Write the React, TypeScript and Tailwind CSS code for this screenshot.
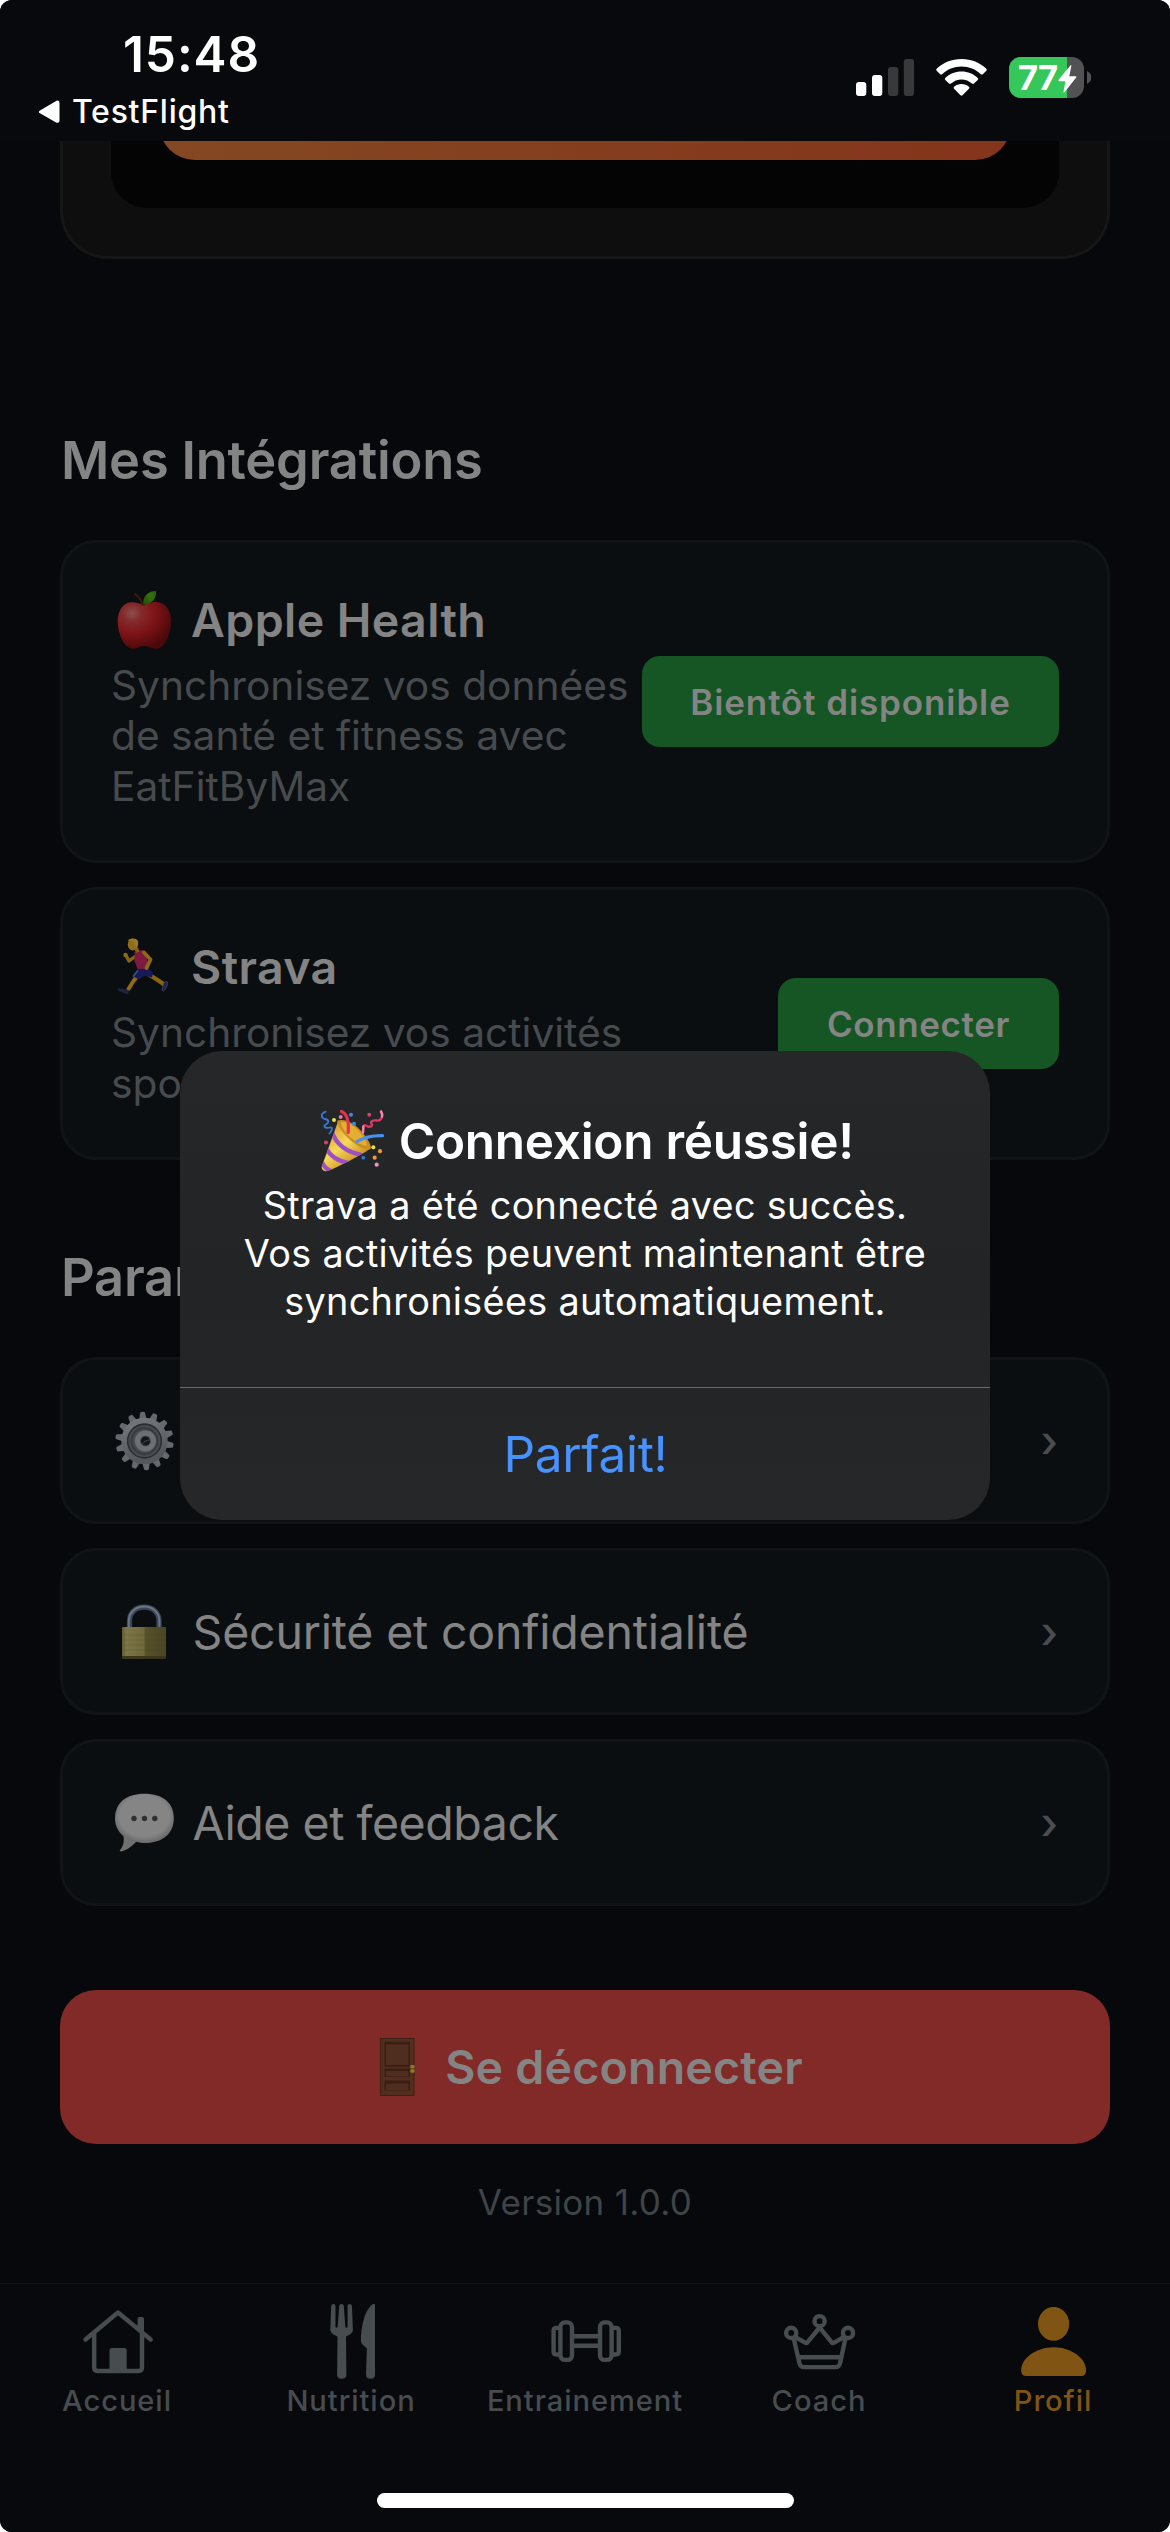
import React from 'react';

function AppleIcon() {
  return (
    <svg className="h-[60px] w-[60px] shrink-0" viewBox="0 0 60 60">
      <defs>
        <radialGradient id="apple-body" cx="0.27" cy="0.24" r="0.8">
          <stop offset="0" stopColor="#8a4f4b" />
          <stop offset="0.24" stopColor="#85282a" />
          <stop offset="0.55" stopColor="#7d1416" />
          <stop offset="1" stopColor="#4c080b" />
        </radialGradient>
        <linearGradient id="apple-leaf" x1="0" y1="1" x2="1" y2="0">
          <stop offset="0" stopColor="#1e4a06" />
          <stop offset="0.6" stopColor="#34700c" />
          <stop offset="1" stopColor="#28600a" />
        </linearGradient>
      </defs>
      <path d="M30 15C35 12 40 11.500 45 12.500C53 14 57 22 57 31C57 43 51 58.700 42 58.700C37 58.700 35 56 30 56C25 56 24 58.700 19 58.700C10 58.700 3.700 43 3.700 31C3.700 21 9 12.500 17 12.200C22 12 26 13.500 30 15Z" fill="url(#apple-body)" />
      <path d="M21 4C25 6.500 27.500 10 28.500 15" fill="none" stroke="#4a1b12" strokeWidth="1.800" strokeLinecap="round" />
      <path d="M29.300 14.800C28 7 34 1 42 1C42.600 8.500 38 14 29.300 14.800Z" fill="url(#apple-leaf)" />
    </svg>
  );
}

function RunnerIcon() {
  return (
    <svg className="h-[60px] w-[60px] shrink-0" viewBox="0 0 60 60" fill="none" strokeLinecap="round" strokeLinejoin="round">
      <path d="M21 19.500L15 24L12 18.500" stroke="#8a6410" strokeWidth="3.400" />
      <circle cx="11.500" cy="18" r="2.200" fill="#8f6a14" />
      <path d="M34 37L42 42L49.500 47" stroke="#8a6410" strokeWidth="4.200" />
      <path d="M24 38L19.500 44L14.500 52" stroke="#8f6a14" strokeWidth="4" />
      <path d="M4.500 51.500L14.500 53.500L13.500 57L5 53.500Z" fill="#1c2342" stroke="#1c2342" strokeWidth="1" />
      <path d="M53 44.500C55 46 52 52 49.500 54L48 53L50 46Z" fill="#1c2342" stroke="#39405e" strokeWidth="1" />
      <path d="M20.500 15L27 13L30 13.500L32.500 19L34.500 31.500L24 33L20.500 24Z" fill="#7d1a40" />
      <path d="M24 32L35 31.500L39 36L38 40.500L31 38.500L25 42.500L18.500 39Z" fill="#151b57" />
      <path d="M23.500 34L19.500 39" stroke="#3c4a86" strokeWidth="1.800" />
      <path d="M30 15.500L36.500 22.500L32.500 31" stroke="#8f6a14" strokeWidth="3.800" />
      <path d="M20 11L24 10.500L25.500 14.500L22 16Z" fill="#85600f" />
      <ellipse cx="18.600" cy="7.500" rx="4.800" ry="6" fill="#8f6c1a" />
      <path d="M13.500 3.500C16 .8 22.500 .5 24 4C24.500 7 24 9.500 22.500 11.500L20.500 7.500L19 4.200Z" fill="#9a7a20" />
    </svg>
  );
}

function PartyIcon() {
  return (
    <svg className="h-[62px] w-[62px] shrink-0 overflow-visible" viewBox="0 0 62 62" fill="none" strokeLinecap="round">
      <defs>
        <linearGradient id="cone" x1="0.2" y1="0.2" x2="0.7" y2="0.85">
          <stop offset="0" stopColor="#e0a83a" />
          <stop offset="0.45" stopColor="#f7d95a" />
          <stop offset="1" stopColor="#c98a1e" />
        </linearGradient>
        <clipPath id="cone-shape">
          <path d="M17.300 10.700L49.500 38.500C40 45 18 57 6 61C3 62 .2 59.500 .8 56.500Z" />
        </clipPath>
      </defs>
      <path d="M17.300 10.700L49.500 38.500C40 45 18 57 6 61C3 62 .2 59.500 .8 56.500Z" fill="url(#cone)" />
      <g clipPath="url(#cone-shape)" stroke="#9b4fc8" strokeWidth="4.200">
        <path d="M11 22C15 34 25 42 41 45" />
        <path d="M5 38C9 46 16 51 28 53" />
        <path d="M1 52C3 57 6 60 11 61" />
      </g>
      <path d="M16.500 10.500C25 8 34 14 41 22C47 29 51 36 49.500 39C44 41 34 35 27 28C20 21 15.500 14 16.500 10.500Z" fill="#c8901f" />
      <path d="M20 12C28 11 36 18 41 25C44 29 46 33 46 36C40 35 33 31 28 26C23 21 20 16 20 12Z" fill="#e3ad36" />
      <path d="M20.500 1.500C27 4 28 12 27.200 22.500" stroke="#e8314e" strokeWidth="3.200" />
      <path d="M36 31.500C44 26.500 52 25.500 61.500 25.700" stroke="#4791ee" strokeWidth="3.200" />
      <path d="M4.700 1.700C-1 4 0 8 4 9C9 10 8 13 4 15C2 17 5 18.500 9 17.500C12 17 11.500 20 8.500 23.500" stroke="#3a78d8" strokeWidth="1.800" />
      <path d="M60 1.500C63 6 60 11 56 10.500C52 10 48 11.500 51 14.500C52 17 47 17.500 45 15.500C41.500 14 42.500 19 42 22.500" stroke="#dc3860" strokeWidth="2.300" />
      <path d="M60 1.500C61 3 61.300 5 61 6.500" stroke="#f08ab5" strokeWidth="2.300" />
      <path d="M42.300 16.500L42 22.500" stroke="#f08ab5" strokeWidth="2.300" />
      <circle cx="13" cy="10" r="2" fill="#efe045" />
      <circle cx="19.700" cy="7" r="2" fill="#e878a8" />
      <circle cx="30" cy="4.700" r="2" fill="#3f88e6" />
      <circle cx="33" cy="13.700" r="2" fill="#3f88e6" />
      <circle cx="48.300" cy="4.700" r="2" fill="#d84070" />
      <circle cx="52.300" cy="37.300" r="2" fill="#efe045" />
      <circle cx="59" cy="41.200" r="2.100" fill="#ee9a3c" />
      <circle cx="53.700" cy="47.700" r="2.100" fill="#ee9a3c" />
      <circle cx="42.300" cy="47.700" r="2" fill="#3070c8" />
      <circle cx="55.700" cy="54.700" r="2.100" fill="#ee8fc0" />
      <circle cx="5" cy="32.500" r="2" fill="#d84068" />
    </svg>
  );
}

const teeth = Array.from({ length: 14 }, (_, i) => (i * 360) / 14 - 4);

function GearIcon() {
  return (
    <svg className="h-[60px] w-[60px] shrink-0" viewBox="0 0 60 60" fill="none">
      <defs>
        <linearGradient id="gear" x1="0" y1="0" x2="0.3" y2="1">
          <stop offset="0" stopColor="#74777b" />
          <stop offset="1" stopColor="#55575c" />
        </linearGradient>
      </defs>
      {teeth.map((a) => (
        <path key={a} d="M26.600 9L28 2Q28.200 .8 29.400 .8H31.600Q32.800 .8 33 2L34.400 9Z" fill="#65686d" transform={`rotate(${a} 30.500 30)`} />
      ))}
      <circle cx="30.500" cy="30" r="20.200" stroke="url(#gear)" strokeWidth="6" />
      <circle cx="30.500" cy="30" r="17.500" fill="#484b4f" />
      <circle cx="30.500" cy="30" r="16.800" stroke="#2a2c2f" strokeWidth="1.400" />
      <circle cx="30.500" cy="30" r="13" stroke="#383b3e" strokeWidth="1.800" />
      <circle cx="31.500" cy="30" r="8" stroke="#6c6f74" strokeWidth="5.200" />
      <circle cx="31.500" cy="30" r="4.600" fill="#14171a" />
      <path d="M28.500 33C30 30.500 33 29 35.500 29" stroke="#4a4c50" strokeWidth="1" />
    </svg>
  );
}

function LockIcon() {
  return (
    <svg className="h-[60px] w-[60px] shrink-0" viewBox="0 0 60 60" fill="none">
      <defs>
        <linearGradient id="lock" x1="0" x2="1">
          <stop offset="0" stopColor="#635c33" />
          <stop offset="0.1" stopColor="#7b7547" />
          <stop offset="0.5" stopColor="#6f683a" />
          <stop offset="0.53" stopColor="#58522b" />
          <stop offset="1" stopColor="#4a4522" />
        </linearGradient>
      </defs>
      <path d="M15.500 26V19C15.500 10 22 5.200 30.200 5.200S45 10 45 19V26" stroke="#3d4652" strokeWidth="5.200" />
      <path d="M14.800 26V19C14.800 10 22 4.600 30.200 4.600S45.400 10 45.400 19V26" stroke="#66768a" strokeWidth="2" />
      <rect x="8" y="25" width="44" height="31.500" rx="1.200" fill="url(#lock)" />
      <rect x="8" y="54" width="44" height="2.500" fill="#3d3719" />
      <path d="M9 33H51M9 38H51M9 43H51M9 48H51" stroke="#3c3718" strokeOpacity="0.15" />
    </svg>
  );
}

function BubbleIcon() {
  return (
    <svg className="h-[60px] w-[60px] shrink-0" viewBox="0 0 60 60">
      <defs>
        <radialGradient id="bubble" cx="0.5" cy="0.45" r="0.56">
          <stop offset="0.75" stopColor="#858585" />
          <stop offset="1" stopColor="#676767" />
        </radialGradient>
      </defs>
      <path d="M9 41C11 48 9 54 6 57C5 58.500 7 58.800 9 58C15 56 19 52 23 48Z" fill="#707070" />
      <path d="M30.500 .8C49 .8 59.800 10 59.800 25.500S48 50 31.500 50S1 41 1 25.500S12 .8 30.500 .8Z" fill="url(#bubble)" />
      <circle cx="20" cy="25.500" r="2.700" fill="#303030" />
      <circle cx="30.500" cy="25.500" r="2.700" fill="#303030" />
      <circle cx="40.800" cy="25.500" r="2.700" fill="#303030" />
    </svg>
  );
}

function DoorIcon() {
  return (
    <svg className="h-[60px] w-[60px] shrink-0" viewBox="0 0 60 60">
      <rect x="13" y="1" width="34.500" height="58" fill="#3c2013" />
      <rect x="14" y="2" width="32.500" height="56" fill="#522e1f" />
      <rect x="17.500" y="4.700" width="25.500" height="25" fill="#3a1e12" />
      <rect x="19" y="7.500" width="22.500" height="20.500" fill="#4f2d1f" />
      <rect x="17.500" y="31.500" width="25.500" height="8.500" fill="#3a1e12" />
      <rect x="19" y="34" width="22.500" height="5.500" fill="#4f2d1f" />
      <rect x="17.500" y="43.500" width="25.500" height="10" fill="#3a1e12" />
      <rect x="19" y="46.500" width="22.500" height="6.500" fill="#4f2d1f" />
      <rect x="43.300" y="28" width="4.200" height="3.500" rx="1" fill="#8b7b22" />
      <rect x="43.300" y="32.300" width="4.200" height="3.500" rx="1" fill="#8b7b22" />
    </svg>
  );
}

function StatusBar() {
  return (
    <header className="flex h-[141px] shrink-0 items-start justify-between bg-[#07090d] pr-[79px] pl-[38px] text-white">
      <div className="pt-6">
        <div className="ml-[85px] text-[49.5px] leading-[60px] font-semibold tracking-[0.92px]">15:48</div>
        <div className="mt-2 flex items-center gap-3">
          <svg className="h-6 w-[22px]" viewBox="0 0 22 24">
            <path d="M2 10.500L18.500 .8Q21.500 -.2 21.500 3V20.500Q21.500 23.500 18.500 22.700L2 13.300Q-.4 12 2 10.500Z" fill="#fff" />
          </svg>
          <span className="text-[32px] leading-10 font-medium tracking-[0.73px]">TestFlight</span>
        </div>
      </div>
      <div className="flex items-start gap-[22px] pt-[57px]">
        <svg className="mt-0.5 h-[37px] w-[58px]" viewBox="0 0 58 37">
          <rect x="0" y="23" width="10.300" height="14" rx="3" fill="#fff" />
          <rect x="16" y="16" width="10.300" height="21" rx="3" fill="#fff" />
          <rect x="32" y="8" width="10.300" height="29" rx="3" fill="#39393c" />
          <rect x="47.800" y="0" width="10.200" height="37" rx="3" fill="#39393c" />
        </svg>
        <svg className="mt-0.5 h-[37px] w-[51px]" viewBox="0 0 51 37" fill="#fff">
          <path d="M25.500 0C35.300 0 44 3.700 50.300 9.700Q51.300 10.700 50.300 11.700L46.800 15.200Q45.800 16 44.800 15.200C39.700 10.300 33 7.500 25.500 7.500S11.300 10.300 6.200 15.200Q5.200 16 4.200 15.200L.7 11.700Q-.3 10.700 .7 9.700C7 3.700 15.700 0 25.500 0Z" />
          <path d="M25.500 12.600C31.800 12.600 37.500 15 41.700 18.900Q42.700 19.900 41.700 20.900L38 24.500Q37 25.300 36 24.500C33.200 22 29.500 20.400 25.500 20.400S17.800 22 15 24.500Q14 25.300 13 24.500L9.300 20.900Q8.300 19.900 9.300 18.900C13.500 15 19.200 12.600 25.500 12.600Z" />
          <path d="M25.500 25C28.300 25 30.900 26 32.900 27.700Q33.900 28.700 32.900 29.700L26.500 36.300Q25.500 37.200 24.500 36.300L18.100 29.700Q17.100 28.700 18.100 27.700C20.100 26 22.700 25 25.500 25Z" />
        </svg>
        <div className="relative flex items-center gap-[3px]">
          <div className="flex h-[41px] w-[75px] overflow-hidden rounded-[12px] bg-[#525255]">
            <div className="h-full w-[58px] bg-[#35c759] pl-[9px] text-[34.500px] leading-[41px] font-bold tracking-[-0.8px]">77</div>
          </div>
          <svg className="h-[13px] w-1" viewBox="0 0 4 13">
            <path d="M0 0Q4.500 2.500 4.500 6.500T0 13Z" fill="#525255" />
          </svg>
          <svg className="absolute top-2 left-[49px] h-7 w-[19px]" viewBox="0 0 19 28">
            <path d="M12.500 .3Q13.700 -.2 13.300 1.200L11.300 11.200H17.500Q19 11.400 18 12.800L6.500 27.300Q5.300 28.200 5.500 26.600L7.500 16.200H1.300Q-.2 16 .8 14.500Z" fill="#fff" />
          </svg>
        </div>
      </div>
    </header>
  );
}

const cardClass = 'flex items-center rounded-[36px] border-[3px] border-[#101417] bg-[#0a0e10]';

function Integration({ icon, title, lines, action, sizeClass, buttonClass }: { icon: React.ReactNode; title: string; lines: string[]; action: string; sizeClass: string; buttonClass: string }) {
  return (
    <section className={`${cardClass} ${sizeClass} justify-between px-12`}>
      <div className="w-[531px]">
        <h3 className="flex h-[58px] items-center gap-[17px] pl-[3px] text-[46.5px] leading-[58px] font-semibold tracking-[0.4px] text-[#848484]">
          {icon}
          {title}
        </h3>
        <p className="mt-3 text-[40.7px] leading-[50.5px] whitespace-nowrap text-[#474b4e]">
          {lines.map((l) => (
            <span key={l} className="block">{l}</span>
          ))}
        </p>
      </div>
      <button className={`${buttonClass} h-[91px] shrink-0 rounded-[18px] bg-[#155624] pt-px text-[35px] font-semibold whitespace-nowrap text-[#848484]`}>{action}</button>
    </section>
  );
}

function MenuItem({ icon, label, labelClass }: { icon: React.ReactNode; label: string; labelClass: string }) {
  return (
    <div className={`${cardClass} h-[167px] px-12`}>
      <div className="flex flex-1 items-center gap-[18.5px] pl-[3px] text-[46.5px] leading-[58px] text-[#848484]">
        {icon}
        <span className={labelClass}>{label}</span>
      </div>
      <span className="mr-px text-[44px] leading-[58px] font-medium text-[#4a4d4f]">›</span>
    </div>
  );
}

const iconClass = 'h-[99px] w-[90px]';

function Tab({ label, active, children }: { label: string; active?: boolean; children: React.ReactNode }) {
  return (
    <div className={`flex flex-col items-center ${active ? 'text-[#805513]' : 'text-[#474c4f]'}`}>
      <svg className={iconClass} viewBox="0 0 90 99" fill="none" stroke="currentColor" strokeWidth="4.400" strokeLinecap="round" strokeLinejoin="round">
        {children}
      </svg>
      <span className="text-[29.1px] leading-9 font-medium tracking-[0.95px]">{label}</span>
    </div>
  );
}

function TabBar() {
  return (
    <nav className="flex h-[249px] shrink-0 flex-col items-center border-t border-[#0f1315] bg-[#07090d]">
      <div className="grid w-full grid-cols-5">
        <Tab label="Accueil">
          <path d="M13.500 55.500L46 28.500L78.700 55.500" />
          <path d="M22.200 50V83.500Q22.200 87 25.500 87H66.500Q70 87 70 83.500V50" />
          <path d="M65.500 45V35Q65.500 33 67.500 33H70Q72 33 72 35V50Z" fill="currentColor" stroke="none" />
          <path d="M37.500 87V66.500Q37.500 64 40 64H52.200Q54.700 64 54.700 66.500V87Z" fill="currentColor" stroke="none" />
        </Tab>
        <Tab label="Nutrition">
          <g fill="currentColor" stroke="none">
            <path d="M25.200 22Q25.400 20 27.400 20T29.500 22V42.500Q29.500 43.800 30.500 43.800T31.700 42.500L33.200 22Q33.400 20 35.500 20T37.800 22L39.300 42.500Q39.400 43.800 40.400 43.800T41.600 42.500V22Q41.600 20 43.600 20T45.900 22L46.900 45.500C47 49.500 43 51 40 52.500L40.400 90.500Q40.400 94.800 35.700 94.800T31.100 90.500L31.500 52.500C28.500 51 24.200 49.500 24.300 45.500Z" />
            <path d="M69 21.500V90.500Q69 94.800 64.500 94.800T60 90.500L60.900 64.500L56.500 60.500Q54.900 59 54.900 56.500C54.900 43 58.500 27 65.500 21Q69 18.500 69 21.500Z" />
          </g>
        </Tab>
        <Tab label="Entrainement">
          <rect x="20.400" y="38.400" width="11.600" height="37.500" rx="4.500" />
          <rect x="60" y="38.400" width="11.600" height="37.500" rx="4.500" />
          <path d="M18.500 43.900H16.500Q13.600 43.900 13.600 46.800V67.500Q13.600 70.500 16.500 70.500H18.500M73.500 43.900H75.500Q78.800 43.900 78.800 46.800V67.500Q78.800 70.500 75.500 70.500H73.500" />
          <path d="M33 52.300H59M33 61.700H59" />
        </Tab>
        <Tab label="Coach">
          <circle cx="45.600" cy="37.200" r="5.100" />
          <circle cx="17.200" cy="48.900" r="5.100" />
          <circle cx="74" cy="48.900" r="5.100" />
          <path d="M20 55.500L25.500 79.500Q26.500 83.100 30 83.100H61.500Q65 83.100 66 79.500L71.200 55.500" />
          <path d="M22 53.500L31.500 58.900Q32.800 59.500 33.600 58.200L45.600 43.500L57.600 58.200Q58.500 59.500 59.700 58.900L69.200 53.500M25 73.200H66.500" />
        </Tab>
        <Tab label="Profil" active>
          <ellipse cx="45.600" cy="39.900" rx="15.600" ry="16.900" fill="currentColor" stroke="none" />
          <path d="M13.200 86C13.200 74.500 28 63.300 45.600 63.300S78 74.500 78 86C78 90 76.500 92 72.500 92H18.700C14.700 92 13.200 90 13.200 86Z" fill="currentColor" stroke="none" />
        </Tab>
      </div>
      <div className="mt-[74px] h-[15px] w-[417px] rounded-full bg-white" />
    </nav>
  );
}

function SuccessDialog() {
  return (
    <div role="dialog" className="absolute top-[1051px] left-[180px] flex h-[469px] w-[810px] flex-col overflow-hidden rounded-[42px] bg-linear-to-b from-[#262728] via-[#232425] to-[#262728] text-white">
      <h2 className="mt-[60px] flex h-[60px] items-center gap-[15.7px] pl-[141px] text-[49.5px] leading-[60px] font-semibold tracking-[-0.27px]">
        <PartyIcon />
        Connexion réussie!
      </h2>
      <p className="mt-2.5 text-center text-[37.8px] leading-12 tracking-[0.31px] whitespace-nowrap">
        Strava a été connecté avec succès.
        <br />
        Vos activités peuvent maintenant être
        <br />
        synchronisées automatiquement.
      </p>
      <button className="mt-auto h-[133px] border-t border-[#696b6d] pl-px text-[49.5px] tracking-[-0.33px] text-[#4792ff]">Parfait!</button>
    </div>
  );
}

export default function App() {
  return (
    <div className="bg-white">
      <div className="relative flex h-[2532px] w-[1170px] flex-col overflow-hidden rounded-[12px] bg-[#06080c] font-['Inter',sans-serif]">
        <StatusBar />
        <main className="flex flex-1 flex-col px-[60px]">
          <div className="h-[118px] rounded-b-[48px] border-x-[3px] border-b-[3px] border-[#161616] bg-[#0e0e0e] px-12">
            <div className="h-[67px] overflow-hidden rounded-b-[36px] bg-[#040404] px-12">
              <div className="-mt-[65px] h-[84px] rounded-[36px] bg-linear-to-r from-[#844822] to-[#84341b]" />
            </div>
          </div>

          <h2 className="mt-[169px] pl-px text-[52.4px] leading-[64px] font-semibold tracking-[-0.21px] text-[#848484]">Mes Intégrations</h2>
          <div className="mt-12 flex flex-col gap-6">
            <Integration icon={<AppleIcon />} title="Apple Health" lines={['Synchronisez vos données', 'de santé et fitness avec', 'EatFitByMax']} action="Bientôt disponible" sizeClass="h-[323px]" buttonClass="w-[417px] tracking-[0.89px]" />
            <Integration icon={<RunnerIcon />} title="Strava" lines={['Synchronisez vos activités', 'sportives']} action="Connecter" sizeClass="h-[273px]" buttonClass="w-[281px] tracking-[0.6px]" />
          </div>

          <h2 className="mt-[85px] pl-px text-[52.4px] leading-[64px] font-semibold tracking-[-0.21px] text-[#848484]">Paramètres</h2>
          <div className="mt-12 flex flex-col gap-6">
            <MenuItem icon={<GearIcon />} label="Préférences" labelClass="tracking-[-0.2px]" />
            <MenuItem icon={<LockIcon />} label="Sécurité et confidentialité" labelClass="tracking-[-0.2px]" />
            <MenuItem icon={<BubbleIcon />} label="Aide et feedback" labelClass="tracking-[-0.45px]" />
          </div>

          <button className="mt-[84px] flex h-[154px] items-center justify-center gap-[18px] rounded-[36px] bg-[#822a27] text-[46.5px] leading-[58px] font-semibold tracking-[0.21px] text-[#848484]">
            <DoorIcon />
            Se déconnecter
          </button>
          <p className="mt-9 text-center text-[35px] leading-[44px] tracking-[0.31px] text-[#3f4446]">Version 1.0.0</p>
        </main>
        <TabBar />
        <SuccessDialog />
      </div>
    </div>
  );
}
